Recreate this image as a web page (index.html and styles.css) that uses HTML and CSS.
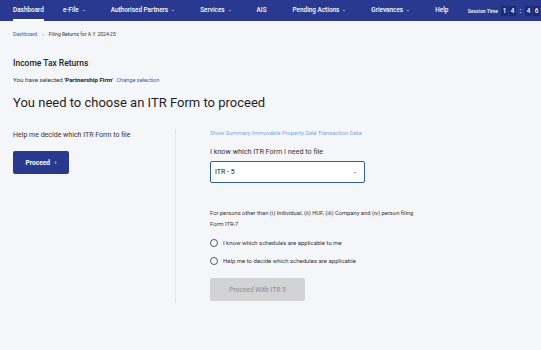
FILE: index.html
```html
<!DOCTYPE html>
<html>
<head>
<meta charset="utf-8">
<link rel="stylesheet" href="styles.css">
</head>
<body>
<nav class="topnav">
  <span class="nav-item active">Dashboard</span>
  <span class="nav-item caret">e-File</span>
  <span class="nav-item caret">Authorised Partners</span>
  <span class="nav-item caret">Services</span>
  <span class="nav-item">AIS</span>
  <span class="nav-item caret">Pending Actions</span>
  <span class="nav-item caret">Grievances</span>
  <span class="nav-item last">Help</span>
  <span class="session">
    <span class="session-label">Session Time</span>
    <span class="digit">1</span><span class="digit">4</span><span class="colon">:</span><span class="digit">4</span><span class="digit">6</span>
  </span>
</nav>
<main class="page">
  <div class="breadcrumb"><span class="crumb-link">Dashboard</span><span class="crumb-sep">›</span><span>Filing Returns for A.Y. 2024-25</span></div>
  <h2 class="section-title">Income Tax Returns</h2>
  <p class="selected">You have selected <b>'Partnership Firm'</b> <span class="link">Change selection</span></p>
  <h1 class="headline">You need to choose an ITR Form to proceed</h1>
  <div class="columns">
    <div class="col-left">
      <p class="label">Help me decide which ITR Form to file</p>
      <button class="btn-primary">Proceed <span class="chev">›</span></button>
    </div>
    <div class="divider"></div>
    <div class="col-right">
      <p class="summary-link">Show Summary Immovable Property Sale Transaction Data</p>
      <p class="label">I know which ITR Form I need to file</p>
      <div class="select"><span>ITR - 5</span><span class="select-caret"></span></div>
      <p class="note">For persons other than (i) Individual, (ii) HUF, (iii) Company and (iv) person filing Form ITR-7</p>
      <label class="radio"><span class="radio-circle"></span>I know which schedules are applicable to me</label>
      <label class="radio"><span class="radio-circle"></span>Help me to decide which schedules are applicable</label>
      <button class="btn-disabled">Proceed With ITR 5</button>
    </div>
  </div>
</main>
</body>
</html>
```

FILE: styles.css
```css
* { box-sizing: border-box; }
html, body { margin: 0; padding: 0; }
body {
  background: #f5f6fa;
  font-family: Roboto, "Liberation Sans", sans-serif;
  color: #2b2b2b;
  width: 541px;
  height: 350px;
  overflow: hidden;
}
.topnav {
  height: 21px;
  background: #2a3990;
  display: flex;
  align-items: center;
  padding-left: 13px;
  color: #fff;
  font-size: 6.4px;
  font-weight: 500;
  white-space: nowrap;
}
.nav-item {
  position: relative;
  height: 21px;
  line-height: 21px;
  margin-right: 26px;
  flex-shrink: 0;
}
.nav-item.active { margin-right: 19px; }
.nav-item.last { margin-right: 0; }
.nav-item.caret::after {
  content: "";
  display: inline-block;
  margin-left: 4px;
  vertical-align: 1px;
  border-left: 1.6px solid transparent;
  border-right: 1.6px solid transparent;
  border-top: 1.6px solid #fff;
}
.nav-item.active::after {
  content: "";
  position: absolute;
  left: 0;
  right: 0;
  bottom: 0;
  height: 2px;
  background: #fff;
}
.session { display: flex; align-items: center; margin-left: auto; flex-shrink: 0; }
.session-label { font-size: 5px; margin-right: 3px; }
.digit {
  display: inline-block;
  width: 7px;
  height: 10px;
  line-height: 10px;
  text-align: center;
  background: #1f2b70;
  font-size: 6.4px;
  margin-right: 1px;
}
.colon { font-size: 7px; width: 7px; text-align: center; margin-right: 1px; }
.page { padding: 0 13px; }
.breadcrumb {
  font-size: 5px;
  color: #333;
  padding-top: 10px;
  height: 36px;
}
.crumb-link { color: #2a5bbf; }
.crumb-sep { margin: 0 5px; color: #666; }
.section-title {
  margin: 0;
  font-size: 8.5px;
  font-weight: 500;
  color: #222;
  line-height: 12px;
}
.selected {
  margin: 6px 0 0;
  font-size: 6.2px;
  color: #333;
  line-height: 10px;
}
.selected b { font-weight: 700; color: #222; }
.link { color: #2a5bbf; font-size: 5.6px; margin-left: 2px; }
.headline {
  margin: 9px 0 0;
  font-size: 13px;
  font-weight: 400;
  color: #1f1f1f;
  line-height: 18px;
}
.columns {
  display: flex;
  margin-top: 14px;
}
.col-left { width: 162px; padding-top: 4px; }
.divider { width: 1px; background: #e4e6ec; height: 174px; margin-top: 3px; }
.col-right { padding-left: 34px; width: 240px; padding-top: 2px; }
.label {
  margin: 0;
  font-size: 7px;
  color: #333;
  line-height: 10px;
}
.btn-primary {
  margin-top: 11px;
  width: 56px;
  height: 23px;
  background: #2a3990;
  color: #fff;
  border: none;
  border-radius: 2px;
  font-family: inherit;
  font-size: 6.6px;
  font-weight: 700;
  padding: 0;
}
.chev { font-weight: 400; margin-left: 3px; }
.summary-link {
  margin: 0;
  font-size: 5.8px;
  color: #78a6dc;
  line-height: 10px;
}
.col-right .label { margin-top: 9px; font-size: 7.2px; }
.select {
  margin-top: 4px;
  width: 155px;
  height: 22px;
  background: #fff;
  border: 1px solid #2e62a8;
  border-radius: 2px;
  display: flex;
  align-items: center;
  justify-content: space-between;
  padding: 0 8px 0 4px;
  font-size: 7px;
  color: #222;
}
.select-caret {
  border-left: 1.8px solid transparent;
  border-right: 1.8px solid transparent;
  border-top: 1.8px solid #444;
}
.note {
  margin: 25px 0 0;
  font-size: 5.8px;
  color: #333;
  line-height: 11px;
  width: 215px;
}
.radio {
  display: flex;
  align-items: center;
  font-size: 6px;
  color: #333;
  margin-top: 7px;
  height: 11px;
}
.radio + .radio { margin-top: 7px; }
.radio-circle {
  width: 8px;
  height: 8px;
  border: 0.8px solid #555;
  border-radius: 50%;
  margin-right: 5px;
  background: #fff;
}
.btn-disabled {
  margin-top: 12px;
  width: 95px;
  height: 23px;
  background: #d3d3d5;
  color: #9a9a9a;
  border: none;
  border-radius: 2px;
  font-family: inherit;
  font-size: 6.6px;
  font-weight: 500;
  padding: 0;
}
```
